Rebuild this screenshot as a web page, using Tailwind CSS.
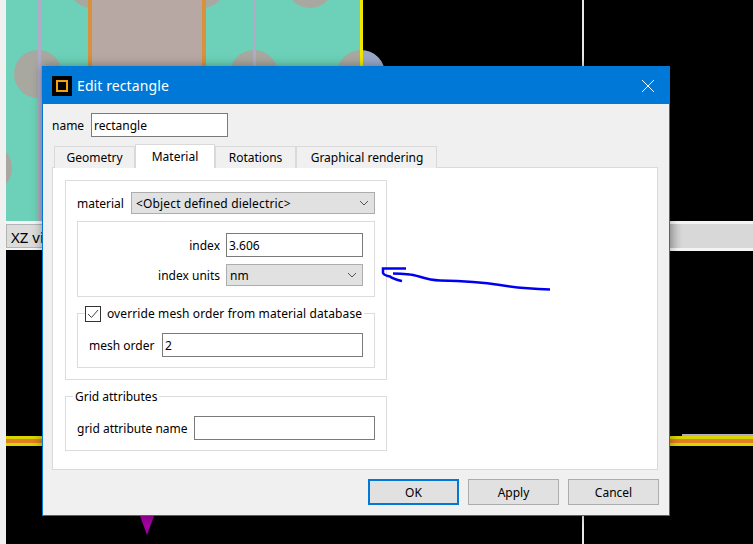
<!DOCTYPE html>
<html>
<head>
<meta charset="utf-8">
<script src="https://cdn.jsdelivr.net/npm/@tailwindcss/browser@4"></script>
</head>
<body class="m-0">
<div class="relative w-[753px] h-[544px] overflow-hidden bg-black font-['Noto_Sans',sans-serif] text-[12px] text-black">
  <!-- background canvas -->
  <div class="absolute left-0 top-0 w-[6px] h-[544px] bg-[#f0f0f0]"></div>
  <div class="absolute left-[582px] top-0 w-[2px] h-[544px] bg-[#e8e8e8]"></div>
  <div class="absolute left-[337px] top-[50px] w-[48px] h-[48px] rounded-full bg-[#9aa8c8]"></div>
  <div class="absolute left-[6px] top-0 w-[354px] h-[221px] bg-[#6cd1b8] overflow-hidden">
    <div class="absolute left-[8px] top-[50px] w-[48px] h-[48px] rounded-full bg-[#a8a8a0]"></div>
    <div class="absolute left-[224px] top-[50px] w-[48px] h-[48px] rounded-full bg-[#a8a8a0]"></div>
    <div class="absolute left-[331px] top-[50px] w-[48px] h-[48px] rounded-full bg-[#a8a8a0]"></div>
    <div class="absolute left-[-42px] top-[144px] w-[48px] h-[48px] rounded-full bg-[#a8a8a0]"></div>
    <div class="absolute left-[62px] top-[-40px] w-[48px] h-[48px] rounded-full bg-[#a8a8a0]"></div>
    <div class="absolute left-[172px] top-[-40px] w-[48px] h-[48px] rounded-full bg-[#a8a8a0]"></div>
    <div class="absolute left-[280px] top-[-40px] w-[48px] h-[48px] rounded-full bg-[#a8a8a0]"></div>
    <div class="absolute left-[32px] top-0 w-[3px] h-[221px] bg-[#b0acc8]"></div>
    <div class="absolute left-[247px] top-0 w-[3px] h-[221px] bg-[#b0acc8]"></div>
    <div class="absolute left-[82px] top-0 w-[118px] h-[221px] bg-[#b8a8a4] border-x-4 border-[#d8913c]"></div>
  </div>
  <div class="absolute left-[360px] top-0 w-[3px] h-[70px] bg-[#f0e800]"></div>
  <div class="absolute left-[6px] top-[221px] w-[90px] h-[29px] bg-[#dcdcdc] border-y-[3px] border-[#f4f4f4]"></div>
  <div class="absolute left-[6px] top-[224px] w-[90px] h-[24px] bg-[#dcdcdc] border border-[#b4b4b4] pl-[4px] text-[15px] leading-[24px] whitespace-nowrap">XZ view</div>
  <div class="absolute left-[670px] top-[221px] w-[83px] h-[30px] bg-[#d8d8d8] border-y-[3px] border-[#f4f4f4] bg-gradient-to-r from-[#bcbcbc] to-[#d8d8d8] to-[15%]"></div>
  <div class="absolute left-[6px] top-[436px] w-[36px] h-[10px] bg-[#dcd400] flex items-center"><div class="w-full h-[4px] bg-[#e08020]"></div></div>
  <div class="absolute left-[670px] top-[436px] w-[83px] h-[10px] bg-[#dcd400] flex items-center"><div class="w-full h-[4px] bg-[#e08020]"></div></div>
  <div class="absolute left-[682px] top-[434px] w-[71px] h-[2px] bg-[#b0acc8]"></div>
  <svg class="absolute left-[140px] top-[516px]" width="14" height="19" viewBox="0 0 14 19"><path d="M0 0H14L7 19Z" fill="#a000a0"/></svg>

  <!-- dialog -->
  <div class="absolute left-[42px] top-[66px] w-[628px] h-[450px] bg-[#f0f0f0] border border-[#0078d7] flex flex-col shadow-[0_0_10px_rgba(0,0,0,0.35)]">
    <div class="h-[37px] shrink-0 bg-[#0078d7] flex items-center pl-[9px] pr-[15px] text-white text-[14px]">
      <div class="w-[20px] h-[20px] bg-black flex items-center justify-center mr-[5px]">
        <div class="w-[12px] h-[12px] border-2 border-[#f0a010]"></div>
      </div>
      <span class="flex-1 tracking-[0.1px]">Edit rectangle</span>
      <svg width="12" height="12" viewBox="0 0 12 12"><path d="M0 0L12 12M12 0L0 12" stroke="#fff" stroke-width="1" fill="none"/></svg>
    </div>
    <div class="flex flex-col px-[9px] pt-[9px]">
      <div class="flex items-center h-[24px]">
        <span class="w-[39px] pt-[2px]">name</span>
        <div class="w-[137px] h-[24px] bg-white border border-[#7a7a7a] pl-[2px] leading-[24px]">rectangle</div>
      </div>
      <!-- tabs -->
      <div class="flex items-end h-[24px] mt-[6px] pl-[2px] relative z-10">
        <div class="w-[81px] h-[22px] -mb-px bg-[#f0f0f0] border border-b-0 border-[#d9d9d9] text-center leading-[22px]">Geometry</div>
        <div class="w-[80px] h-[24px] -mb-px bg-white border border-b-0 border-[#d9d9d9] text-center leading-[24px]">Material</div>
        <div class="w-[81px] h-[22px] -mb-px bg-[#f0f0f0] border border-b-0 border-[#d9d9d9] text-center leading-[22px]">Rotations</div>
        <div class="w-[141px] h-[22px] -mb-px bg-[#f0f0f0] border border-b-0 border-[#d9d9d9] text-center leading-[22px] pl-[1px]">Graphical rendering</div>
      </div>
      <div class="w-[606px] h-[303px] bg-white border border-[#d9d9d9] p-[12px] flex flex-col gap-[16px]">
        <!-- material group -->
        <div class="w-[322px] h-[200px] border border-[#dcdcdc] px-[11px] pt-[11px] flex flex-col">
          <div class="flex items-center h-[22px]">
            <span class="w-[54px] pt-[2px]">material</span>
            <div class="w-[244px] h-[22px] bg-[#e1e1e1] border border-[#adadad] flex items-center justify-between pl-[4px] pr-[5px]">
              <span class="pt-[2px] tracking-[0.15px]">&lt;Object defined dielectric&gt;</span>
              <svg width="10" height="6" viewBox="0 0 10 6"><path d="M1 1L5 5L9 1" stroke="#555" fill="none"/></svg>
            </div>
          </div>
          <div class="w-[298px] h-[76px] mt-[7px] border border-[#dcdcdc] pt-[11px] pr-[11px] flex flex-col items-end gap-[7px]">
            <div class="flex items-center gap-[6px] h-[24px]">
              <span class="pt-[2px]">index</span>
              <div class="w-[137px] h-[24px] bg-white border border-[#7a7a7a] pl-[2px] leading-[24px]">3.606</div>
            </div>
            <div class="flex items-center gap-[6px] h-[22px]">
              <span class="pt-[2px]">index units</span>
              <div class="w-[137px] h-[22px] bg-[#e1e1e1] border border-[#adadad] flex items-center justify-between pl-[3px] pr-[5px]">
                <span class="pt-[2px]">nm</span>
                <svg width="10" height="6" viewBox="0 0 10 6"><path d="M1 1L5 5L9 1" stroke="#555" fill="none"/></svg>
              </div>
            </div>
          </div>
          <div class="relative w-[298px] h-[55px] mt-[16px] border border-[#dcdcdc] pl-[11px] pt-[19px]">
            <div class="absolute left-[7px] top-[-9px] flex items-center bg-white pr-[2px] h-[18px] whitespace-nowrap">
              <div class="w-[16px] h-[16px] border border-[#333] bg-white flex items-center justify-center mr-[6px]">
                <svg width="12" height="10" viewBox="0 0 12 10"><path d="M1 5L4.500 8.500L11 1" stroke="#444" fill="none"/></svg>
              </div>
              <span class="tracking-[0.1px]">override mesh order from material database</span>
            </div>
            <div class="flex items-center h-[24px]">
              <span class="w-[73px] pt-[2px]">mesh order</span>
              <div class="w-[201px] h-[24px] bg-white border border-[#7a7a7a] pl-[2px] leading-[24px]">2</div>
            </div>
          </div>
        </div>
        <!-- grid group -->
        <div class="relative w-[322px] h-[55px] border border-[#dcdcdc] pl-[11px] pt-[19px]">
          <span class="absolute left-[7px] top-[-9px] bg-white px-[2px] leading-[18px]">Grid attributes</span>
          <div class="flex items-center h-[24px]">
            <span class="w-[117px] pt-[2px]">grid attribute name</span>
            <div class="w-[181px] h-[24px] bg-white border border-[#7a7a7a]"></div>
          </div>
        </div>
      </div>
    </div>
    <!-- buttons -->
    <div class="flex gap-[9px] pl-[325px] mt-[9px]">
      <div class="w-[91px] h-[26px] bg-[#e1e1e1] border-2 border-[#0078d7] text-center leading-[24px]">OK</div>
      <div class="w-[91px] h-[26px] bg-[#e1e1e1] border border-[#adadad] text-center leading-[26px]">Apply</div>
      <div class="w-[91px] h-[26px] bg-[#e1e1e1] border border-[#adadad] text-center leading-[26px]">Cancel</div>
    </div>
  </div>

  <!-- hand-drawn arrow -->
  <svg class="absolute left-0 top-0 pointer-events-none" width="753" height="544" viewBox="0 0 753 544">
    <path d="M550 289.500C535 289 515 287.500 500 285C488 283 475 281 440 280.500C425 280 418 275 410 274.500C405 274 398 273.500 393 273.500" stroke="#0000f0" stroke-width="2.500" fill="none"/>
    <path d="M406 268.500H383V273C384 275 387 276 390 276.500C393 279 398 280 402 281" stroke="#0000f0" stroke-width="2.500" fill="none"/>
  </svg>
</div>
</body>
</html>
